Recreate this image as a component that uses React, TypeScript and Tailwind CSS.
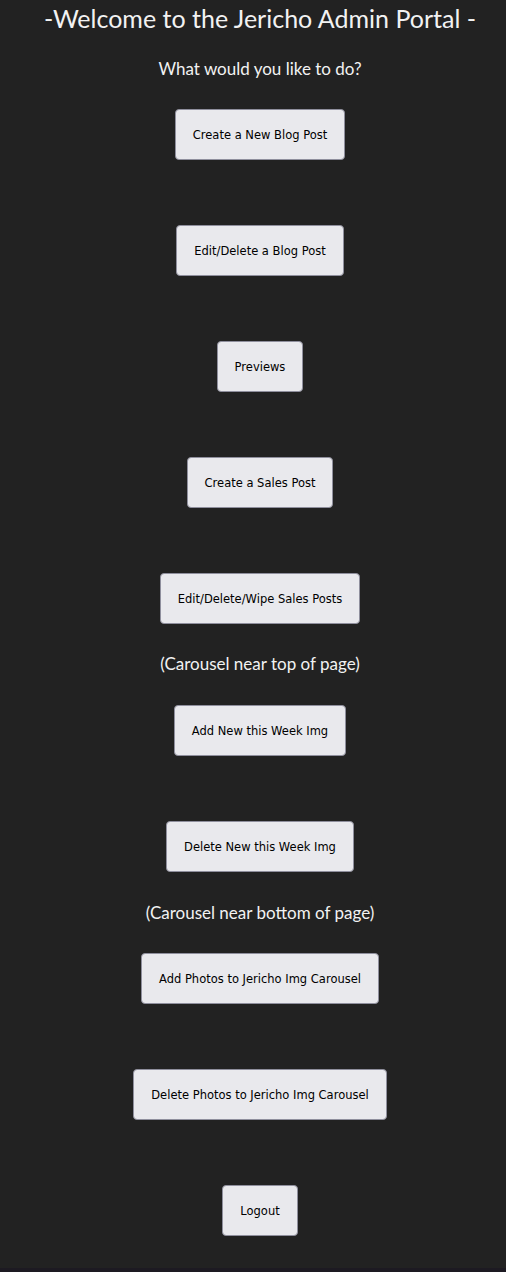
import React from "react";

const Btn = ({ children, mt }: { children: React.ReactNode; mt: string }) => (
  <button
    className={`${mt} h-[51px] px-[17px] pt-[3px] bg-[#e9e9ed] border border-[#8f8f9d] rounded-[4px] text-[11.5px] text-black`}
    style={{ fontFamily: '"DejaVu Sans", sans-serif' }}
  >
    {children}
  </button>
);

export default function App() {
  return (
    <div className="bg-[#1d1a22] min-h-[1272px]">
      <div
        className="bg-[#222222] h-[1268px] pl-[14px] flex flex-col items-center text-[#f2f2f2]"
        style={{ fontFamily: 'Lato, "Open Sans", sans-serif' }}
      >
        <h1 className="text-[25px] leading-[36px] font-normal">-Welcome to the Jericho Admin Portal -</h1>
        <p className="mt-[21px] text-[17px] leading-[24px]">What would you like to do?</p>
        <Btn mt="mt-[28px]">Create a New Blog Post</Btn>
        <Btn mt="mt-[65px]">Edit/Delete a Blog Post</Btn>
        <Btn mt="mt-[65px]">Previews</Btn>
        <Btn mt="mt-[65px]">Create a Sales Post</Btn>
        <Btn mt="mt-[65px]">Edit/Delete/Wipe Sales Posts</Btn>
        <p className="mt-[28px] text-[17px] leading-[24px]">(Carousel near top of page)</p>
        <Btn mt="mt-[29px]">Add New this Week Img</Btn>
        <Btn mt="mt-[65px]">Delete New this Week Img</Btn>
        <p className="mt-[29px] text-[17px] leading-[24px]">(Carousel near bottom of page)</p>
        <Btn mt="mt-[28px]">Add Photos to Jericho Img Carousel</Btn>
        <Btn mt="mt-[65px]">Delete Photos to Jericho Img Carousel</Btn>
        <Btn mt="mt-[65px]">Logout</Btn>
      </div>
    </div>
  );
}
